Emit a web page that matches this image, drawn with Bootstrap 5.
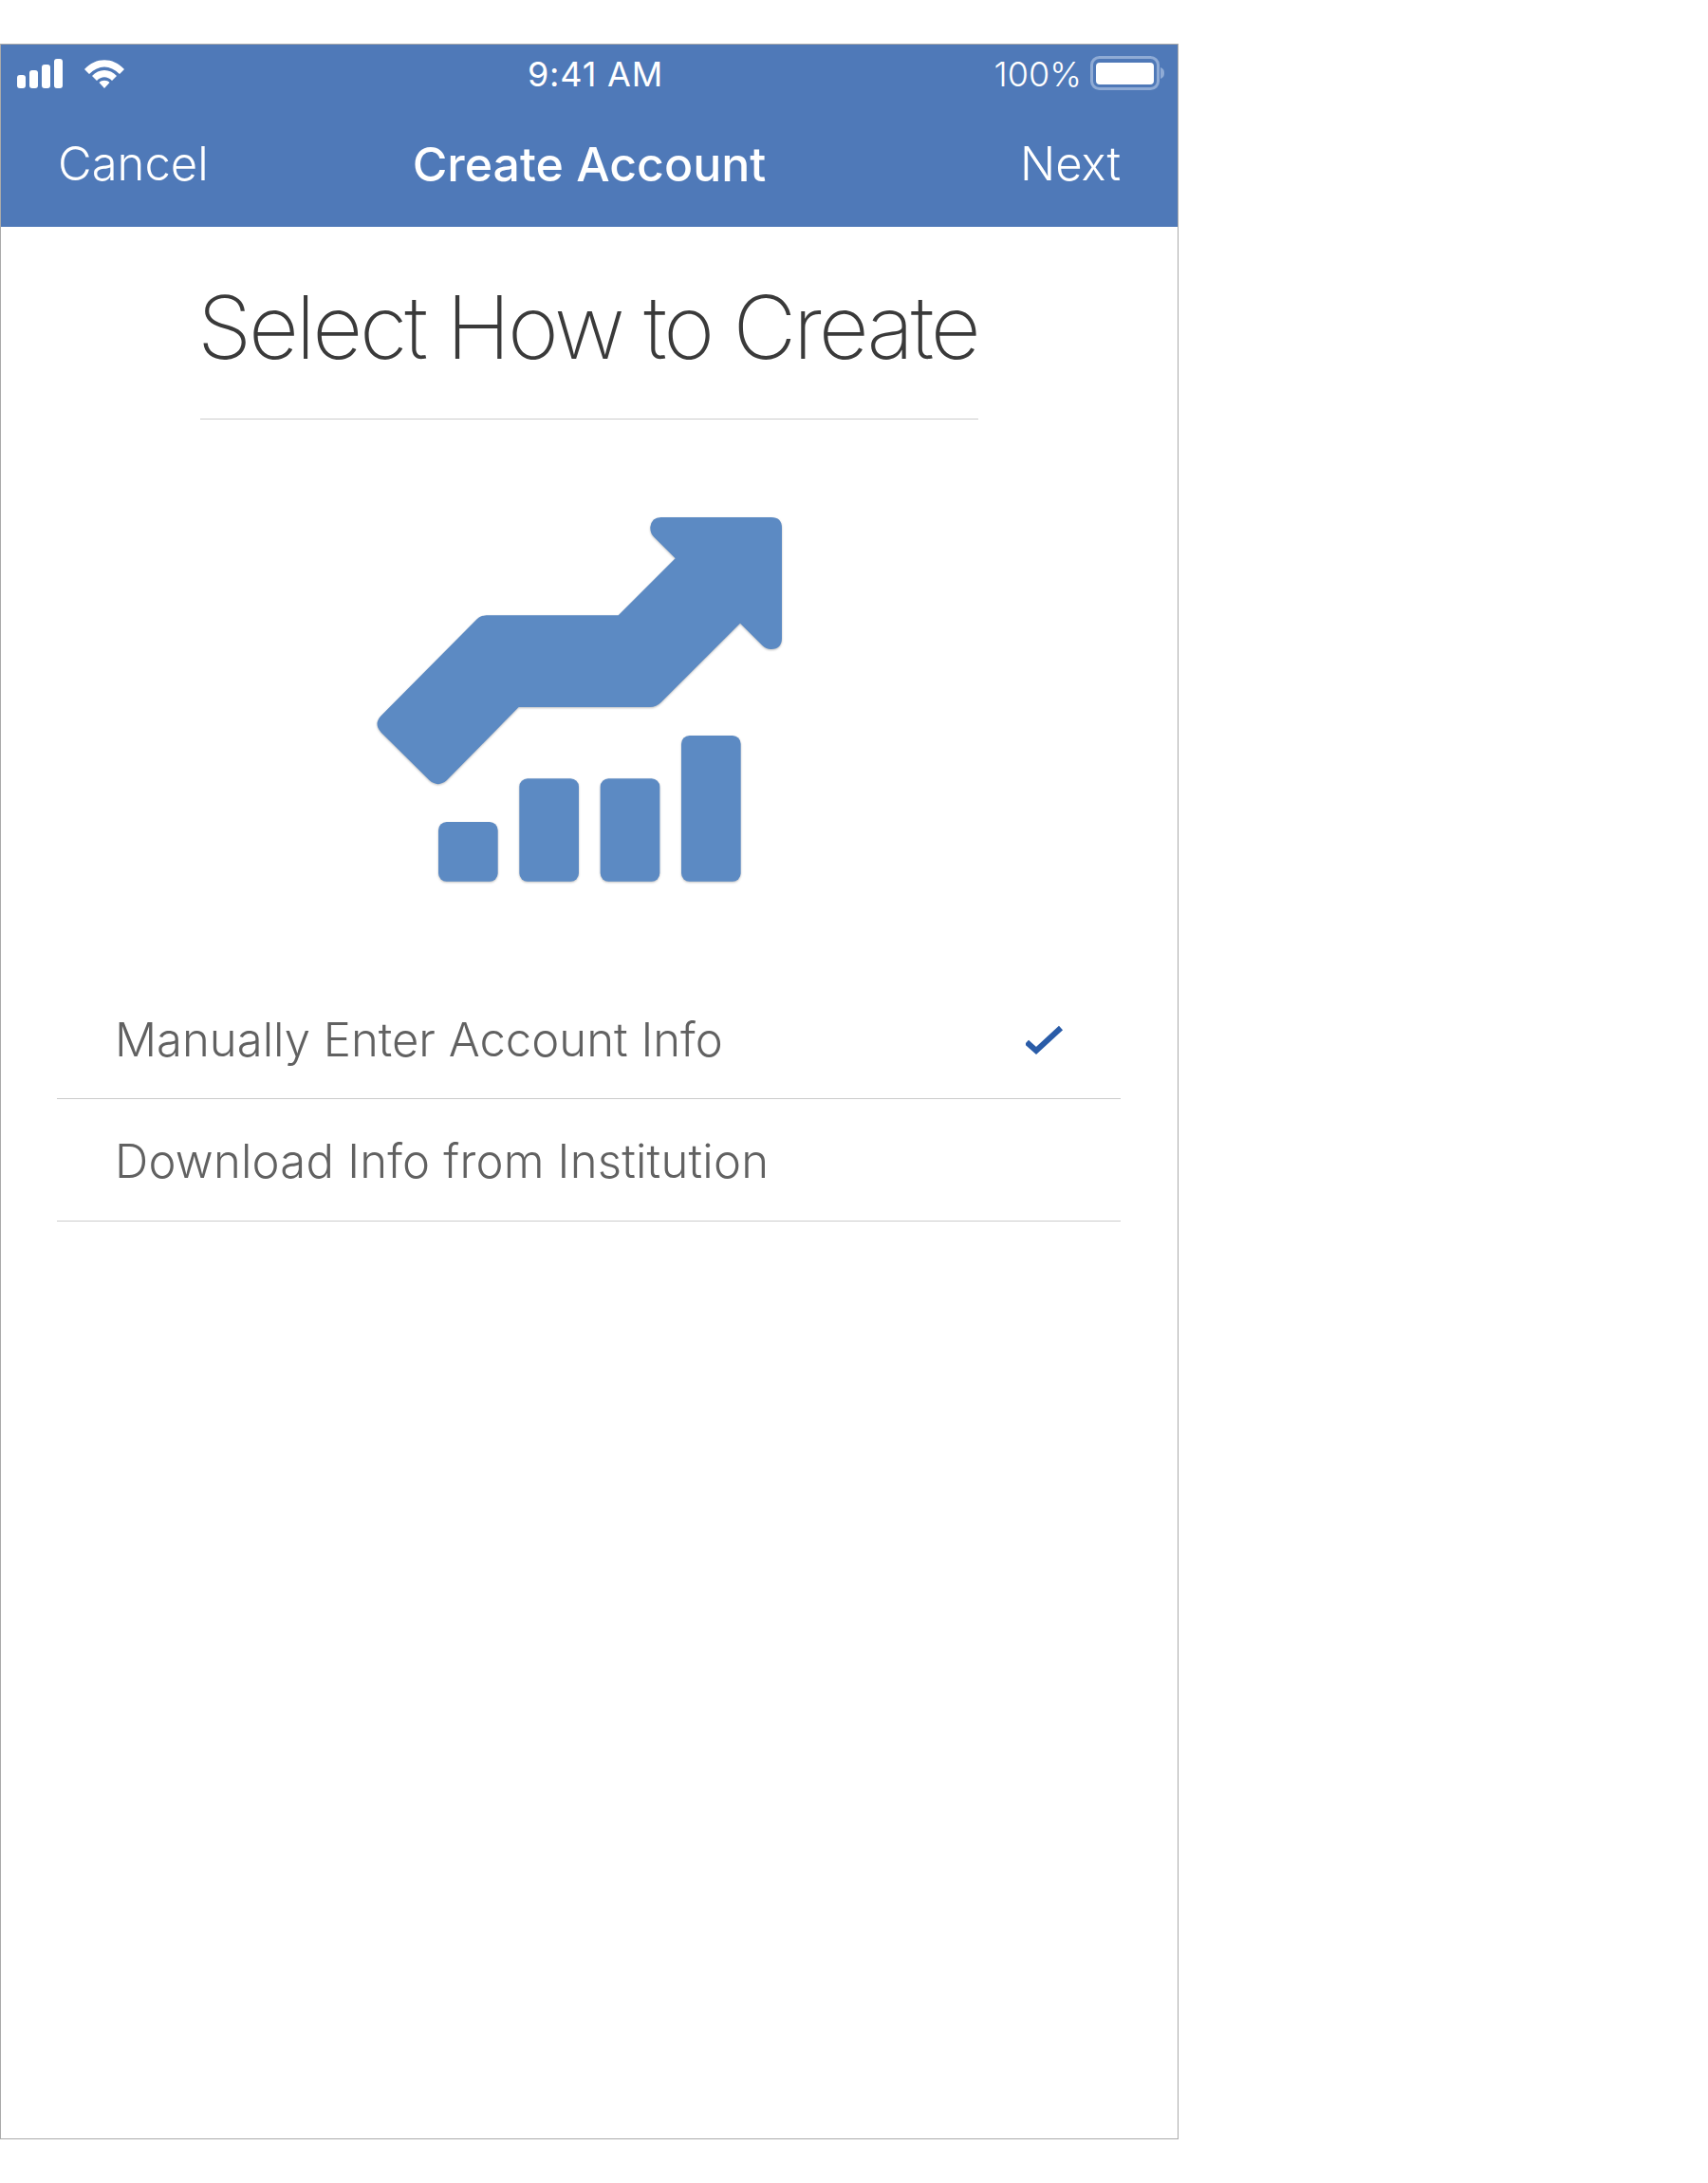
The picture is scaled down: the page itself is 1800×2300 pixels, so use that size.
<!DOCTYPE html>
<html lang="en">
<head>
    <meta charset="UTF-8">
    <meta name="viewport" content="width=device-width, initial-scale=1.0">
    <title>Create Account</title>
    <link href="https://cdn.jsdelivr.net/npm/bootstrap@5.3.0/dist/css/bootstrap.min.css" rel="stylesheet">
    <style>
        body {
            font-family: Inter, "Liberation Sans", sans-serif;
            background: #fff;
        }
        .phone-frame {
            width: 1242px;
            height: 2208px;
            margin-top: 46px;
            border: 1px solid #aaa;
        }
        .app-header {
            height: 192px;
            padding-top: 9px;
            background: #4f79b8;
            color: #fff;
        }
        .status-row {
            height: 44px;
            padding: 0 13px 0 17px;
            font-size: 36px;
        }
        .status-side {
            width: 400px;
        }
        .status-side svg {
            margin-bottom: 2px;
        }
        .status-time {
            font-weight: 400;
            letter-spacing: .8px;
            margin-left: 9px;
        }
        .status-pct {
            font-weight: 300;
            margin-right: 9px;
        }
        .nav-row {
            height: 60px;
            margin-top: 43px;
            padding: 0 60px;
            font-size: 49px;
            line-height: 60px;
        }
        .nav-side {
            font-weight: 300;
            width: 200px;
        }
        .nav-title {
            font-weight: 500;
            font-size: 50px;
        }
        .page-title {
            width: 820px;
            height: 203px;
            margin: 0 auto;
            padding-top: 56px;
            border-bottom: 1px solid #ccc;
            font-size: 92px;
            line-height: 100px;
            font-weight: 200;
            letter-spacing: -3.2px;
            text-indent: -3px;
            color: #3a3a3a;
            white-space: nowrap;
        }
        .hero-wrap {
            height: 588px;
            padding-top: 88px;
            padding-left: 379px;
        }
        .hero-icon {
            filter: drop-shadow(0 1px 1px rgba(0,0,0,.25));
        }
        .option-list {
            margin: 0 60px 0 59px;
        }
        .option-row {
            height: 129px;
            padding: 4px 60px 0 61px;
            border-bottom: 1px solid #ccc;
            font-size: 49px;
            font-weight: 300;
            color: #616161;
        }
        .option-first {
            height: 128px;
        }
        .option-wide {
            letter-spacing: .2px;
        }
    </style>
</head>
<body>
    <div class="phone-frame">
        <div class="app-header">
            <div class="status-row d-flex align-items-center justify-content-between">
                <div class="status-side d-flex align-items-center gap-3">
                    <svg width="50" height="31" viewBox="0 0 50 31" fill="#fff">
                        <rect x="0" y="17" width="9" height="14" rx="3"/>
                        <rect x="13" y="12" width="9" height="19" rx="3"/>
                        <rect x="26" y="6" width="9" height="25" rx="3"/>
                        <rect x="39" y="0" width="9" height="31" rx="3"/>
                    </svg>
                    <svg class="ms-1" width="44" height="31" viewBox="0 0 44 31" fill="#fff">
                        <path d="M1 11 C13 -2 31 -2 43 11 L38 16 C28 6 16 6 6 16Z"/>
                        <path d="M9 18 C16 10 28 10 35 18 L30 23 C25 18 19 18 14 23Z"/>
                        <path d="M16.500 25 C19 22 25 22 27.500 25 L22 31Z"/>
                    </svg>
                </div>
                <div class="status-time">9:41 AM</div>
                <div class="status-side d-flex align-items-center justify-content-end">
                    <span class="status-pct">100%</span>
                    <svg width="79" height="36" viewBox="0 0 79 36" fill="#fff">
                        <rect x="1.500" y="1.500" width="70" height="33" rx="8" fill="none" stroke="#8fabd5" stroke-width="3"/>
                        <rect x="6" y="7" width="61" height="23" rx="4"/>
                        <path d="M74 12 C77 13 78 15 78 18 C78 21 77 23 74 24Z" fill="#8fabd5"/>
                    </svg>
                </div>
            </div>
            <div class="nav-row d-flex align-items-center justify-content-between">
                <div class="nav-side">Cancel</div>
                <div class="nav-title">Create Account</div>
                <div class="nav-side text-end">Next</div>
            </div>
        </div>

        <div class="page-title">Select How to Create</div>

        <div class="hero-wrap">
            <svg class="hero-icon" width="460" height="420" viewBox="0 0 1380 1260">
                <path fill="#5c8ac3" d="M65 672 L368 367 Q380 355 398 355 L815 355 L995 175 L928 108 Q915 95 916 76 Q920 45 950 45 L1298 45 Q1332 45 1332 79 L1332 428 Q1332 460 1298 462 Q1282 462 1270 450 L1200 380 L950 630 Q935 645 915 645 L500 645 L272 877 Q245 900 218 877 L65 725 Q40 698 65 672Z"/>
                <rect x="246" y="1008" width="188" height="188" rx="26" fill="#5c8ac3"/>
                <rect x="502" y="871" width="188" height="325" rx="26" fill="#5c8ac3"/>
                <rect x="758" y="871" width="188" height="325" rx="26" fill="#5c8ac3"/>
                <rect x="1014" y="735" width="188" height="461" rx="26" fill="#5c8ac3"/>
            </svg>
        </div>

        <div class="option-list">
            <div class="option-row option-first d-flex align-items-center justify-content-between">
                <span>Manually Enter Account Info</span>
                <svg width="40" height="36" viewBox="0 0 40 36">
                    <path d="M1 20 L11 29 L37 5" fill="none" stroke="#2a5ca8" stroke-width="6"/>
                </svg>
            </div>
            <div class="option-row option-wide d-flex align-items-center">Download Info from Institution</div>
        </div>
    </div>
    <script src="https://cdn.jsdelivr.net/npm/bootstrap@5.3.0/dist/js/bootstrap.bundle.min.js"></script>
</body>
</html>
